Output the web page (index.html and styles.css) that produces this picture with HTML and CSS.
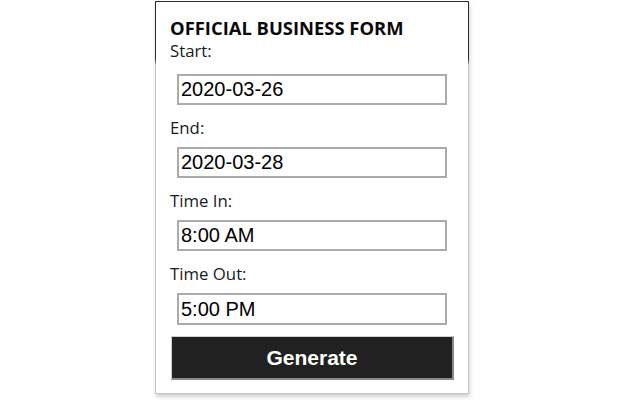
FILE: index.html
```html
<!DOCTYPE html>
<html>
<head>
<meta charset="utf-8">
<link rel="stylesheet" href="styles.css">
</head>
<body>
<div class="popup">
  <div class="title">OFFICIAL BUSINESS FORM</div>
  <label class="label">Start:</label>
  <input class="field" type="text" value="2020-03-26">
  <label class="label">End:</label>
  <input class="field" type="text" value="2020-03-28">
  <label class="label">Time In:</label>
  <input class="field" type="text" value="8:00 AM">
  <label class="label">Time Out:</label>
  <input class="field" type="text" value="5:00 PM">
  <button class="generate" type="button">Generate</button>
</div>
</body>
</html>
```
FILE: styles.css
```css
html, body {
  margin: 0;
  padding: 0;
  background: #ffffff;
}
body {
  width: 640px;
  height: 400px;
  overflow: hidden;
}
.popup {
  box-sizing: border-box;
  width: 314px;
  height: 393px;
  margin: 1px 0 0 155px;
  padding: 0 14px 0 14px;
  background: #fff;
  border: 1px solid #bbb;
  border-image: linear-gradient(to bottom, #2a2a2a 0, #2a2a2a 58px, #c4c4c4 64px, #c4c4c4 100%) 1;
  box-shadow: 1px 3px 4px rgba(0,0,0,0.18);
  display: flex;
  flex-direction: column;
  align-items: flex-start;
  font-family: "Open Sans", "Noto Sans", sans-serif;
  color: #111;
}
.title {
  margin-top: 14px;
  font-size: 18.4px;
  font-weight: 700;
  line-height: 24px;
  color: #0a0a0a;
}
.label {
  font-size: 16.8px;
  line-height: 22px;
  margin-top: 3px;
  color: #1a1a1a;
}
.title + .label {
  margin-top: 0;
  margin-bottom: 4px;
}
.field {
  box-sizing: border-box;
  width: 270px;
  height: 31px;
  margin: 8px 0 9px 7px;
  padding: 0 2px;
  border: 2px solid #ababab;
  font-family: "Liberation Sans", Arial, sans-serif;
  font-size: 20px;
  color: #000;
  background: #fff;
  outline: none;
}
.field:last-of-type {
  height: 32px;
}
.generate {
  box-sizing: border-box;
  width: 283px;
  height: 44px;
  margin: 2px 0 0 1px;
  background: #212121;
  color: #fff;
  border: 1px solid #d0d0d0;
  border-right: 2px solid #8a8a8a;
  border-bottom: 2px solid #8a8a8a;
  font-family: "Liberation Sans", Arial, sans-serif;
  font-weight: 700;
  font-size: 21px;
  padding: 0;
}
```
